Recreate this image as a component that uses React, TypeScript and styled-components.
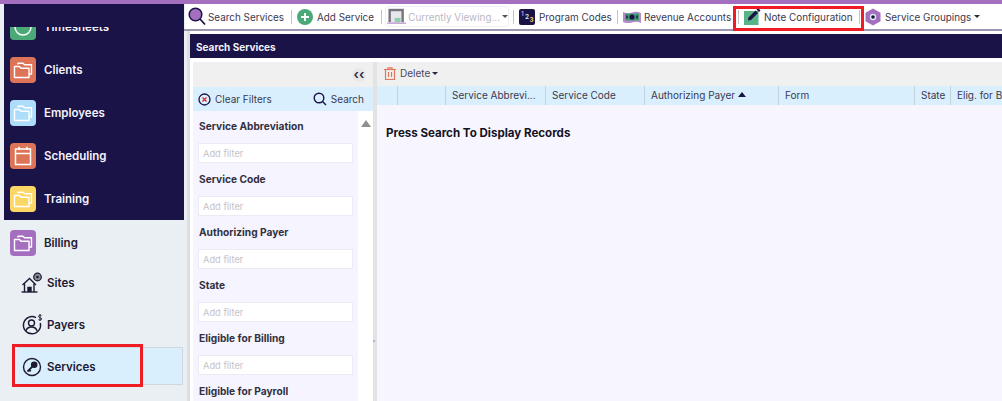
import React from "react";
import styled, {createGlobalStyle} from "styled-components";

const Global = createGlobalStyle`
    html, body {
        margin: 0;
        padding: 0;
        width: 1002px;
        height: 401px;
        overflow: hidden;
        background: #fff;
        font-family: Inter, "Noto Sans", sans-serif;
    }
    * {
        box-sizing: border-box;
    }
`;

const NAVY = "#1a1347";

const Page = styled.div`
    position: relative;
    width: 1002px;
    height: 401px;
    overflow: hidden;
    display: flex;
    flex-direction: column;
`;

const TopStripe = styled.div`
    height: 4px;
    flex: none;
    background: #a56fc0;
`;

const Body = styled.div`
    flex: 1;
    min-height: 0;
    display: flex;
`;

/* sidebar */
const Sidebar = styled.aside`
    width: 190px;
    flex: none;
    padding: 0 6px 0 4px;
    background: #eaeff4;
    display: flex;
    flex-direction: column;
    box-shadow: inset -3px 0 0 #dcdfe2;
`;

const DarkMenu = styled.div`
    height: 216px;
    flex: none;
    background: ${NAVY};
    padding-top: 23px;
    overflow: hidden;
`;

const DarkMenuClip = styled.div`
    height: 193px;
    overflow: hidden;
`;

const MenuList = styled.div`
    margin-top: -22px;
    display: flex;
    flex-direction: column;
`;

const MenuItem = styled.div<{$dark?: boolean}>`
    height: 43px;
    flex: none;
    display: flex;
    align-items: center;
    gap: 8px;
    padding-left: 6px;
    font-size: 11.5px;
    font-weight: 600;
    color: ${p => p.$dark ? "#f4f2fb" : "#1d1a33"};
`;

const IconTile = styled.div<{$bg: string}>`
    width: 26px;
    height: 26px;
    flex: none;
    border-radius: 4px;
    background: ${p => p.$bg};
    display: flex;
    align-items: center;
    justify-content: center;
`;

const LightMenu = styled.div`
    flex: 1;
    min-height: 0;
    padding-top: 1px;
    overflow: hidden;
    display: flex;
    flex-direction: column;
`;

const SubList = styled.div`
    margin-top: -1px;
    display: flex;
    flex-direction: column;
    gap: 4px;
`;

const SubItem = styled.div<{$active?: boolean}>`
    height: 38px;
    margin-left: 13px;
    margin-right: 1px;
    padding: 1px 0 0 3px;
    display: flex;
    align-items: center;
    gap: 4px;
    font-size: 11.5px;
    font-weight: 600;
    color: #1d1a33;
    background: ${p => p.$active ? "#d9effd" : "transparent"};
    border: 1px solid ${p => p.$active ? "#cfd8de" : "transparent"};
    border-left-color: transparent;
`;

const NextHint = styled.div`
    margin: 14px 0 0 25px;
    font-size: 11.5px;
    font-weight: 600;
    color: #5a5a66;
`;

/* main column */
const Main = styled.main`
    flex: 1;
    min-width: 0;
    display: flex;
    flex-direction: column;
`;

const Toolbar = styled.div`
    height: 25px;
    flex: none;
    margin-left: -5px;
    display: flex;
    align-items: center;
    background: #fff;
    font-size: 9.9px;
    color: #3b3850;
`;

const ToolbarRule = styled.div`
    height: 2px;
    flex: none;
    margin-left: -6px;
    background: #9b97b3;
`;

const ToolButton = styled.div<{$w: number; $pad?: number; $gap?: number}>`
    width: ${p => p.$w}px;
    flex: none;
    display: flex;
    align-items: center;
    gap: ${p => p.$gap ?? 3}px;
    padding-left: ${p => p.$pad ?? 5}px;
    white-space: nowrap;
`;

const ToolSep = styled.span`
    width: 1px;
    height: 14px;
    flex: none;
    background: #c4c4c8;
`;

const Caret = styled.span<{$color?: string; $ml?: number}>`
    width: 0;
    height: 0;
    margin-left: ${p => p.$ml ?? 3}px;
    border-left: 3px solid transparent;
    border-right: 3px solid transparent;
    border-top: 3px solid ${p => p.$color || "#2a2740"};
`;

const ViewingBox = styled.div`
    width: 124px;
    height: 21px;
    flex: none;
    margin: 0 4px 0 3px;
    padding-left: 1px;
    display: flex;
    align-items: center;
    gap: 2px;
    border: 1px solid #f0f0f0;
    border-radius: 3px;
    color: #b9b8c2;
    white-space: nowrap;
`;

const Panel = styled.section`
    flex: 1;
    min-height: 0;
    padding-top: 3px;
    display: flex;
    flex-direction: column;
    background: #fff;
`;

const PanelTitle = styled.h2`
    height: 24px;
    flex: none;
    margin: 0;
    padding: 1px 0 0 6px;
    display: flex;
    align-items: center;
    background: ${NAVY};
    color: #f4f2fb;
    font-size: 10px;
    font-weight: 700;
`;

const PanelBody = styled.div`
    flex: 1;
    min-height: 0;
    margin-top: 4px;
    padding-left: 3px;
    display: flex;
`;

/* filters */
const Filters = styled.div`
    width: 180px;
    flex: none;
    display: flex;
    flex-direction: column;
    overflow: hidden;
`;

const CollapseRow = styled.div`
    height: 25px;
    flex: none;
    display: flex;
    align-items: center;
    justify-content: flex-end;
    padding-right: 7px;
    background: #f0f0f0;
`;

const CollapseButton = styled.div`
    width: 14px;
    height: 14px;
    border-radius: 50%;
    background: #e8e8e8;
    color: #2a2740;
    font-size: 13px;
    font-weight: 600;
    line-height: 12px;
    text-align: center;
`;

const FilterActions = styled.div`
    height: 24px;
    flex: none;
    display: flex;
    align-items: center;
    justify-content: space-between;
    padding: 0 9px 0 5px;
    background: #d9effd;
    font-size: 10px;
    color: #3b3850;
`;

const Action = styled.div`
    display: flex;
    align-items: center;
    gap: 4px;
`;

const FilterScroll = styled.div`
    flex: 1;
    min-height: 0;
    display: flex;
`;

const FilterList = styled.div`
    width: 165px;
    flex: none;
    padding: 9px 5px 0 5px;
    background: #f6f5ff;
    display: flex;
    flex-direction: column;
`;

const FilterGroup = styled.div`
    height: 53px;
    flex: none;
`;

const FilterLabel = styled.div`
    height: 13px;
    padding-left: 1px;
    font-size: 10.2px;
    line-height: 13px;
    font-weight: 700;
    color: #33313f;
`;

const FilterInput = styled.div`
    height: 20px;
    margin-top: 10px;
    padding-left: 4px;
    display: flex;
    align-items: center;
    background: #fff;
    border: 1px solid #eceaf4;
    font-size: 9.3px;
    color: #c3c3c9;
`;

const ScrollTrack = styled.div`
    flex: 1;
    padding-top: 9px;
    display: flex;
    justify-content: center;
    background: #fff;
`;

const ScrollArrow = styled.span`
    width: 0;
    height: 0;
    border-left: 5px solid transparent;
    border-right: 5px solid transparent;
    border-bottom: 7px solid #8f8f8f;
`;

const Splitter = styled.div`
    width: 4px;
    flex: none;
    display: flex;
    align-items: center;
    background: #e3e3e3;
    color: #33313f;
    font-size: 5px;
    padding-top: 219px;
`;

/* grid */
const Results = styled.div`
    flex: 1;
    min-width: 0;
    display: flex;
    flex-direction: column;
    background: #f7f6ff;
`;

const ResultsBar = styled.div`
    height: 24px;
    flex: none;
    padding: 0 0 2px 7px;
    display: flex;
    align-items: center;
    gap: 4px;
    background: #f0f0f0;
    font-size: 10px;
    color: #4b4862;
`;

const HeaderRow = styled.div`
    height: 19px;
    flex: none;
    display: flex;
    background: #d9effd;
    font-size: 10px;
    color: #3b3850;
    overflow: hidden;
`;

const HeaderCell = styled.div<{$w: number}>`
    width: ${p => p.$w}px;
    flex: none;
    padding: 0 0 2px 6px;
    display: flex;
    align-items: center;
    gap: 3px;
    white-space: nowrap;
    border-right: 1px solid #c4d2dc;
`;

const SortArrow = styled.span`
    width: 0;
    height: 0;
    border-left: 4px solid transparent;
    border-right: 4px solid transparent;
    border-bottom: 5px solid ${NAVY};
`;

const EmptyText = styled.div`
    margin: 21px 0 0 9px;
    font-size: 11.55px;
    line-height: 15px;
    font-weight: 700;
    color: #14121f;
`;

/* the red boxes drawn on top of the screenshot */
const Callout = styled.div<{$x: number; $y: number; $w: number; $h: number}>`
    position: absolute;
    left: ${p => p.$x}px;
    top: ${p => p.$y}px;
    width: ${p => p.$w}px;
    height: ${p => p.$h}px;
    border: 3px solid #ee1c25;
    pointer-events: none;
`;

const FolderIcon = () => (
    <svg width="20" height="18" viewBox="0 0 20 18" fill="none" stroke="#fff" strokeWidth="1.4" strokeLinejoin="round">
        <path d="M5 3.5V2.2h5l1.5 1.6H18.5V13H16"/>
        <path d="M1.5 5.5h5L8 7.2h8V16.5H1.5z"/>
    </svg>
);

const CalendarIcon = () => (
    <svg width="18" height="20" viewBox="0 0 18 20" fill="none" stroke="#fff" strokeWidth="1.5">
        <rect x="1.5" y="3" width="15" height="15.5"/>
        <path d="M1.5 7.5h15M5 .8V4M13 .8V4"/>
    </svg>
);

const ClockIcon = () => (
    <svg width="20" height="20" viewBox="0 0 20 20" fill="none" stroke="#fff" strokeWidth="1.5">
        <circle cx="10" cy="10" r="8"/>
    </svg>
);

const SitesIcon = () => (
    <svg width="22" height="22" viewBox="0 0 22 22" fill="none" stroke="#1d1a33" strokeWidth="1.4">
        <path d="M0.500 20h16"/>
        <path d="M1.500 13 8.500 6.500l6.500 6.500"/>
        <path d="M3.500 11.500V20M13 11.500V20"/>
        <path d="M7 20v-4.500h3V20" fill="#1d1a33"/>
        <circle cx="16.500" cy="5" r="3.800" fill="#8b8a94" strokeWidth="1.200"/>
        <circle cx="16.500" cy="5" r="1.300" fill="#1d1a33" stroke="none"/>
    </svg>
);

const PayersIcon = () => (
    <svg width="22" height="22" viewBox="0 0 22 22" fill="none" stroke="#1d1a33" strokeWidth="1.4">
        <path d="M15 3.600A8.600 8.600 0 1 0 19.300 9"/>
        <circle cx="10.500" cy="9" r="3"/>
        <path d="M4.800 17c1-3 3-4 5.700-4s4.700 1 5.700 4"/>
        <path d="M20.500 1.600c-2-1-3.500 0-2.800 1.300.6 1 2.900.7 2.900 2.100 0 1.200-1.800 1.400-3.100.7M19 .2v6.500" strokeWidth="1"/>
    </svg>
);

const ServicesIcon = () => (
    <svg width="22" height="22" viewBox="-1 -1 22 22" fill="none" stroke="#1d1a33" strokeWidth="1.4">
        <circle cx="10" cy="10" r="8.500"/>
        <circle cx="12.200" cy="7.800" r="2.600" fill="#1d1a33"/>
        <path d="M10.300 9.700 5.500 14.500M7.200 12.800l1.500 1.500" strokeWidth="1.800"/>
    </svg>
);

const SearchPurpleIcon = () => (
    <svg width="18" height="19" viewBox="0 0 18 19" fill="none">
        <circle cx="7.500" cy="7.500" r="6.300" fill="#a56fc0" stroke={NAVY} strokeWidth="1.500"/>
        <path d="M12 12l5 5.500" stroke={NAVY} strokeWidth="1.800"/>
    </svg>
);

const AddIcon = () => (
    <svg width="16" height="16" viewBox="0 0 16 16">
        <circle cx="8" cy="8" r="8" fill="#4aa977"/>
        <path d="M8 4v8M4 8h8" stroke="#fff" strokeWidth="1.800"/>
    </svg>
);

const ViewingIcon = () => (
    <svg width="20" height="17" viewBox="0 0 20 17">
        <rect x="1.500" y="0.500" width="16" height="14" fill="#77747f"/>
        <rect x="4" y="3" width="11" height="11.500" fill="#e7e6ea"/>
        <rect x="8" y="10" width="6" height="4.500" fill="#8ed0ae"/>
        <path d="M0 15.500h20" stroke="#c9a6da" strokeWidth="1.500"/>
    </svg>
);

const CodesIcon = () => (
    <svg width="16" height="16" viewBox="0 0 16 16" fontFamily="Inter, sans-serif" fontSize="6.500" fontWeight="600">
        <rect width="16" height="16" rx="2" fill={NAVY}/>
        <text x="2" y="7" fill="#b79be0">1</text>
        <text x="6" y="10" fill="#d9effd">2</text>
        <text x="10.500" y="13" fill="#fcd766">3</text>
    </svg>
);

const MoneyIcon = () => (
    <svg width="18" height="12" viewBox="0 0 18 12">
        <path d="M0 1c3 1.500 6 1.500 9 .5s6-1 9 .5v10c-3-1.500-6-1.500-9-.5s-6 1-9-.5z" fill="#b789cd"/>
        <rect x="2" y="2.500" width="14" height="7" fill="#3f9d70"/>
        <circle cx="9" cy="6" r="2.600" fill={NAVY}/>
        <path d="M4 4.500v3M14 4.500v3" stroke={NAVY} strokeWidth="1.400"/>
    </svg>
);

const NoteIcon = () => (
    <svg width="17" height="17" viewBox="0 0 17 17">
        <rect x="0" y="3" width="14.500" height="14" fill="#56b487"/>
        <path d="M4.500 9.500 11.500 2.500l2.500 2.500-7 7-3 .5z" fill={NAVY}/>
        <path d="M12.500 1.500 14 0l2.500 2.500L15 4z" fill={NAVY}/>
    </svg>
);

const HexIcon = () => (
    <svg width="16" height="18" viewBox="0 0 16 18">
        <path d="M8 .5 15.500 4.700v8.600L8 17.500.5 13.300V4.700z" fill="#a56fc0"/>
        <circle cx="8" cy="9" r="3.200" fill="#d9ecef"/>
        <circle cx="8" cy="9" r="1.800" fill={NAVY}/>
    </svg>
);

const ClearIcon = () => (
    <svg width="13" height="13" viewBox="0 0 13 13" fill="none">
        <circle cx="6.500" cy="6.500" r="5.500" stroke={NAVY} strokeWidth="1.300"/>
        <path d="M4.500 4.500l4 4M8.500 4.500l-4 4" stroke="#d9282f" strokeWidth="1.300"/>
    </svg>
);

const SearchIcon = () => (
    <svg width="14" height="14" viewBox="0 0 14 14" fill="none" stroke={NAVY} strokeWidth="1.400">
        <circle cx="6" cy="6" r="4.800"/>
        <path d="M9.500 9.500 13 13"/>
    </svg>
);

const TrashIcon = () => (
    <svg width="12" height="13" viewBox="0 0 12 13" fill="none" stroke="#e0765c" strokeWidth="1.200">
        <path d="M0 2.500h12M4 2.500V.8h4v1.700"/>
        <rect x="1.500" y="2.500" width="9" height="10"/>
        <path d="M4.500 5v5M7.500 5v5"/>
    </svg>
);

const filterNames = ["Service Abbreviation", "Service Code", "Authorizing Payer", "State", "Eligible for Billing", "Eligible for Payroll"];

const columns: {label: string, width: number, sorted?: boolean}[] = [
    {label: "", width: 21},
    {label: "", width: 48},
    {label: "Service Abbrevi...", width: 100},
    {label: "Service Code", width: 99},
    {label: "Authorizing Payer", width: 134, sorted: true},
    {label: "Form", width: 136},
    {label: "State", width: 36},
    {label: "Elig. for Billing", width: 90},
];

export default function App() {
    return (
        <Page>
            <Global/>
            <TopStripe/>
            <Body>
                <Sidebar>
                    <DarkMenu>
                        <DarkMenuClip>
                            <MenuList>
                                <MenuItem $dark><IconTile $bg="#4aa977"><ClockIcon/></IconTile>Timesheets</MenuItem>
                                <MenuItem $dark><IconTile $bg="#dd7458"><FolderIcon/></IconTile>Clients</MenuItem>
                                <MenuItem $dark><IconTile $bg="#aedcfb"><FolderIcon/></IconTile>Employees</MenuItem>
                                <MenuItem $dark><IconTile $bg="#dd7458"><CalendarIcon/></IconTile>Scheduling</MenuItem>
                                <MenuItem $dark><IconTile $bg="#fcd766"><FolderIcon/></IconTile>Training</MenuItem>
                            </MenuList>
                        </DarkMenuClip>
                    </DarkMenu>
                    <LightMenu>
                        <MenuItem><IconTile $bg="#a56fc0"><FolderIcon/></IconTile>Billing</MenuItem>
                        <SubList>
                            <SubItem><SitesIcon/>Sites</SubItem>
                            <SubItem><PayersIcon/>Payers</SubItem>
                            <SubItem $active><ServicesIcon/>Services</SubItem>
                        </SubList>
                        <NextHint>Orgs</NextHint>
                    </LightMenu>
                </Sidebar>
                <Main>
                    <Toolbar>
                        <ToolButton $w={106} $pad={3} $gap={2}><SearchPurpleIcon/>Search Services</ToolButton>
                        <ToolSep/>
                        <ToolButton $w={89} $gap={4}><AddIcon/>Add Service</ToolButton>
                        <ToolSep/>
                        <ViewingBox><ViewingIcon/>Currently Viewing...<Caret $color="#55535f" $ml={0}/></ViewingBox>
                        <ToolSep/>
                        <ToolButton $w={103} $gap={4}><CodesIcon/>Program Codes</ToolButton>
                        <ToolSep/>
                        <ToolButton $w={120}><MoneyIcon/>Revenue Accounts</ToolButton>
                        <ToolSep/>
                        <ToolButton $w={120}><NoteIcon/>Note Configuration</ToolButton>
                        <ToolSep/>
                        <ToolButton $w={125} $gap={4}><HexIcon/>Service Groupings<Caret $ml={-1}/></ToolButton>
                    </Toolbar>
                    <ToolbarRule/>
                    <Panel>
                        <PanelTitle>Search Services</PanelTitle>
                        <PanelBody>
                            <Filters>
                                <CollapseRow><CollapseButton>‹‹</CollapseButton></CollapseRow>
                                <FilterActions>
                                    <Action><ClearIcon/>Clear Filters</Action>
                                    <Action><SearchIcon/>Search</Action>
                                </FilterActions>
                                <FilterScroll>
                                    <FilterList>
                                        {filterNames.map((name, i) => (
                                            <FilterGroup key={name}>
                                                <FilterLabel>{name}</FilterLabel>
                                                {i < filterNames.length - 1 && <FilterInput>Add filter</FilterInput>}
                                            </FilterGroup>
                                        ))}
                                    </FilterList>
                                    <ScrollTrack><ScrollArrow/></ScrollTrack>
                                </FilterScroll>
                            </Filters>
                            <Splitter>›</Splitter>
                            <Results>
                                <ResultsBar><TrashIcon/>Delete<Caret $ml={-2}/></ResultsBar>
                                <HeaderRow>
                                    {columns.map((col, i) => (
                                        <HeaderCell key={i} $w={col.width}>
                                            {col.label}
                                            {col.sorted && <SortArrow/>}
                                        </HeaderCell>
                                    ))}
                                </HeaderRow>
                                <EmptyText>Press Search To Display Records</EmptyText>
                            </Results>
                        </PanelBody>
                    </Panel>
                </Main>
            </Body>
            <Callout $x={733} $y={6} $w={131} $h={25}/>
            <Callout $x={12} $y={344} $w={131} $h={43}/>
        </Page>
    );
}
